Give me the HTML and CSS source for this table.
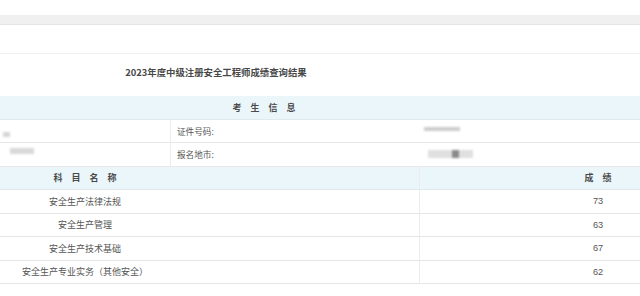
FILE: index.html
```html
<!DOCTYPE html>
<html lang="zh-CN">
<head>
<meta charset="utf-8">
<title>成绩查询结果</title>
<link rel="stylesheet" href="styles.css">
</head>
<body>
<div class="page">
  <div class="top-gap"></div>
  <div class="band"></div>
  <div class="blank"></div>
  <div class="title-row"><span class="title">2023年度中级注册安全工程师成绩查询结果</span></div>
  <div class="sec-head"><span class="spaced">考生信息</span></div>
  <div class="info-row">
    <div class="info-left"><span class="blur blur-a"></span></div>
    <div class="info-label">证件号码:</div>
    <div class="info-value"><span class="blur blur-c"></span></div>
  </div>
  <div class="info-row">
    <div class="info-left"><span class="blur blur-b"></span></div>
    <div class="info-label">报名地市:</div>
    <div class="info-value"><span class="blur blur-d"><span class="blur-dark"></span></span></div>
  </div>
  <div class="subj-head">
    <div class="subj-name"><span class="spaced">科目名称</span></div>
    <div class="subj-mid"></div>
    <div class="subj-gap sep"></div>
    <div class="subj-score"><span class="spaced">成绩</span></div>
  </div>
  <div class="subj-row">
    <div class="subj-name">安全生产法律法规</div>
    <div class="subj-mid"></div>
    <div class="subj-gap sep"></div>
    <div class="subj-score">73</div>
  </div>
  <div class="subj-row">
    <div class="subj-name">安全生产管理</div>
    <div class="subj-mid"></div>
    <div class="subj-gap sep"></div>
    <div class="subj-score">63</div>
  </div>
  <div class="subj-row">
    <div class="subj-name">安全生产技术基础</div>
    <div class="subj-mid"></div>
    <div class="subj-gap sep"></div>
    <div class="subj-score">67</div>
  </div>
  <div class="subj-row">
    <div class="subj-name">安全生产专业实务（其他安全）</div>
    <div class="subj-mid"></div>
    <div class="subj-gap sep"></div>
    <div class="subj-score">62</div>
  </div>
</div>
</body>
</html>
```

FILE: styles.css
```css
* { box-sizing: border-box; }
html, body { margin: 0; padding: 0; background: #fff; }
body {
  font-family: "Noto Sans CJK SC", "Noto Sans", sans-serif;
  color: #555;
  width: 640px;
  height: 296px;
  overflow: hidden;
}
.top-gap { height: 15px; }
.band {
  height: 10px;
  background: #f0f0f0;
  border-bottom: 1px solid #e6e6e6;
}
.blank {
  height: 29px;
  border-bottom: 1px solid #efefef;
}
.title-row {
  height: 42px;
  width: 432px;
  display: flex;
  align-items: center;
  justify-content: center;
  padding-bottom: 6px;
}
.title {
  font-size: 9.4px;
  font-weight: 700;
  color: #484848;
}
.spaced { letter-spacing: 9px; margin-right: -9px; }
.sec-head {
  height: 23.5px;
  width: 100%;
  padding-right: 112px;
  background: #ebf6fb;
  display: flex;
  align-items: center;
  justify-content: center;
  font-size: 9px;
  font-weight: 700;
  color: #4a4a4a;
  border-bottom: 1px solid #dfeaef;
}
.info-row {
  height: 23.5px;
  display: grid;
  grid-template-columns: 170px 254px 1fr;
  border-bottom: 1px solid #e8e8e8;
  font-size: 8.6px;
}
.info-left { position: relative; }
.info-label {
  border-left: 1px solid #ececec;
  display: flex;
  align-items: center;
  padding-left: 6px;
  color: #555;
}
.info-value { position: relative; }
.blur {
  position: absolute;
  background: #cfcfcf;
  filter: blur(1px);
}
.blur-a { left: 3px; top: 12px; width: 7px; height: 5px; background: #d6d6d6; }
.blur-b { left: 10px; top: 5px; width: 24px; height: 6px; background: #d9d9d9; }
.blur-c { left: 0; top: 7px; width: 36px; height: 4px; background: #cdcdcd; }
.blur-d { left: 4px; top: 7px; width: 45px; height: 8px; background: #e0e0e0; }
.blur-dark {
  position: absolute;
  left: 24px; top: 0; width: 7px; height: 8px;
  background: #8a8a8a;
}
.subj-head, .subj-row {
  height: 23.5px;
  display: grid;
  grid-template-columns: 170px 249px 1fr 84px;
  border-bottom: 1px solid #e6e6e6;
  align-items: stretch;
}
.subj-head {
  background: #ebf6fb;
  font-size: 9px;
  font-weight: 700;
  color: #4a4a4a;
  border-bottom-color: #dfeaef;
}
.subj-row { font-size: 9px; color: #555; }
.subj-name, .subj-score {
  display: flex;
  align-items: center;
  justify-content: center;
  white-space: nowrap;
}
.subj-row .subj-score {
  font-family: "Liberation Sans", Arial, sans-serif;
  font-size: 9.2px;
  color: #555;
}
.sep { border-left: 1px solid #ececec; }
```
